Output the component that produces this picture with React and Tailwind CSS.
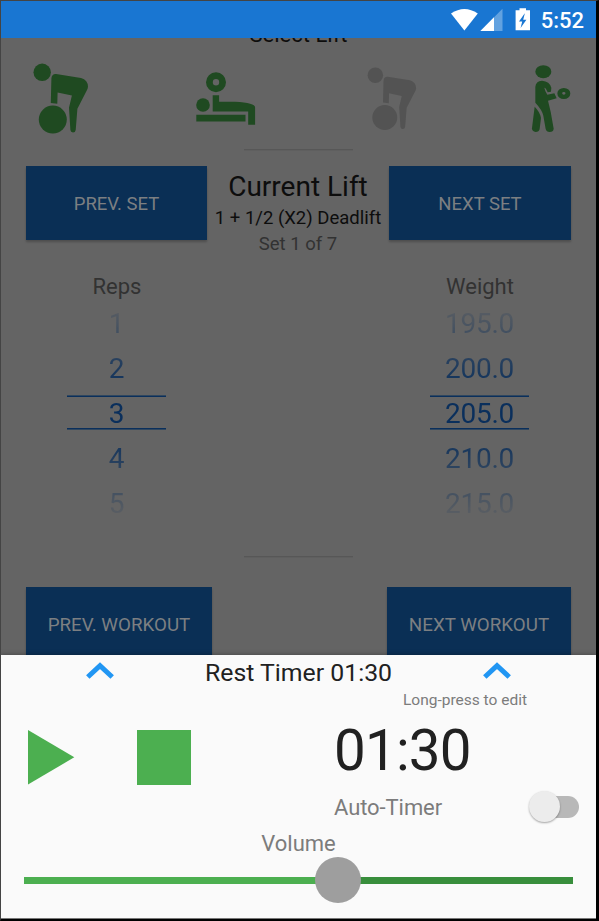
import React from "react";

function StatusBar() {
  return (
    <header className="flex h-[37px] shrink-0 items-center justify-end bg-[#1976d2] pr-3 text-white">
      <svg width="82" height="37" viewBox="450 1 82 37">
        <path d="M451 13.6Q464.4 4.6 477.8 13.6L464.4 30.4Z" fill="#fff" />
        <path d="M480.4 31L502.5 8.8V31Z" fill="#fff" fillOpacity="0.32" />
        <path d="M480.4 31L494 17.3V31Z" fill="#fff" />
        <path
          fillRule="evenodd"
          fill="#fff"
          d="M519.5 8.2h6.5v2h4v20.1h-14.4V10.2h3.9zM524.6 13.6L519 21.6h3.2l-1.6 6.4 5.8-8.2h-3.2l1.6-6.2z"
        />
      </svg>
      <span className="ml-[9px] pt-px text-[22px] leading-[37px] font-medium">5:52</span>
    </header>
  );
}

function DeadliftShape() {
  return (
    <>
      <circle cx="42.2" cy="72.3" r="8.7" />
      <circle cx="52.8" cy="119.6" r="14" />
      <path d="M50.8 102.9L51.4 78.5Q51.8 73.6 56 73.9L81 77.9Q88 80 88 86.8Q87.8 89 86.5 91L77.4 108.8L75.7 130Q75.3 132.6 73 132.6Q70.6 132.4 70.4 130L69 107.8L71.9 95.6L57.6 92.4L57.3 103.7Z" />
    </>
  );
}

function LiftIcons() {
  return (
    <div className="mt-2.5 flex h-[85px] pl-[19px]">
      <svg className="fill-[#1f4a21]" width="80" height="85" viewBox="20 55 80 85">
        <DeadliftShape />
      </svg>
      <svg className="ml-[85px] fill-[#1f4a21]" width="80" height="85" viewBox="185 55 80 85">
        <path
          fillRule="evenodd"
          d="M216 72.3a10 10 0 1 0 0 20a10 10 0 1 0 0-20M216 79.1a3.2 3.2 0 1 1 0 6.4a3.2 3.2 0 1 1 0-6.4"
        />
        <circle cx="203" cy="105" r="6.8" />
        <path d="M212.7 95.2h6.4v6.6H235Q255.1 102.8 255.1 107.5V124.8H248.2V111.5H212.7Z" />
        <path d="M196.3 114.7h49.2v6.8h-49.2z" />
      </svg>
      <svg className="ml-[92px] fill-[#535353]" width="80" height="85" viewBox="357 55 80 85">
        <g transform="translate(367.6 67.6) scale(0.89) translate(-33.5 -63.6)">
          <DeadliftShape />
        </g>
      </svg>
      <svg className="ml-[73px] fill-[#1f4a21]" width="70" height="85" viewBox="510 55 70 85">
        <g transform="translate(510 55) scale(0.33333)">
          <ellipse cx="100" cy="50" rx="24" ry="19.5" />
          <path
            fillRule="evenodd"
            d="M161.500 99a19.500 16.500 0 1 0 0 33a19.500 16.500 0 1 0 0-33M161.500 111a5 4 0 1 1 0 8a5 4 0 1 1 0-8"
          />
          <path d="M76 96Q77 78 96 77Q119 79 124 98L123 110L113 112Q108 98 103 98Q105 109 112 119L133 115L140 130L114 137L122 170L131 221Q130 231 119 231Q109 231 107 222L100 182Q96 164 76 143Z" />
          <path d="M74 155Q89 170 93 188L89 222Q87 231 77 231Q66 230 66 220Z" />
        </g>
      </svg>
    </div>
  );
}

function Divider() {
  return <div className="mx-auto h-[2px] w-[109px] shrink-0 border-b border-[#5f5f5f] bg-[#575757]" />;
}

function NavButton({ className, children }) {
  return (
    <button
      className={
        "flex items-center justify-center bg-[#0a2f55] text-[#7c7f82] shadow-[0_2px_2px_rgba(0,0,0,0.22)] " +
        className
      }
    >
      {children}
    </button>
  );
}

function Picker({ label, values }) {
  return (
    <div className="flex w-[182px] flex-col items-center">
      <div className="text-[22px] leading-[30px] text-[#323232]">{label}</div>
      <div className="mr-[2px] flex w-[99px] flex-col text-center indent-px text-[28px] leading-[43px] tracking-[-0.3px] text-[#0a2f5c] [mask-image:linear-gradient(to_bottom,transparent_-4px,black_88px,black_131px,transparent_222px)]">
        {values.map((value, i) =>
          i === 2 ? (
            <div key={value} className="flex h-[45px] flex-col pt-[3px]">
              <div className="h-[35px] border-y border-[#30475f]">
                <div className="h-[33px] border-y border-[#0a2f5c] leading-[33px]">{value}</div>
              </div>
            </div>
          ) : (
            <div key={value} className="h-[45px]">
              {value}
            </div>
          )
        )}
      </div>
    </div>
  );
}

function Chevron() {
  return (
    <svg width="30" height="20" viewBox="0 0 30 20" className="mb-1 shrink-0">
      <path
        d="M2.800 16L15 4.600L27.200 16"
        fill="none"
        stroke="#2196f3"
        strokeWidth="5"
        strokeLinejoin="miter"
        strokeLinecap="butt"
      />
    </svg>
  );
}

function Workout() {
  return (
    <main className="flex h-[617px] shrink-0 flex-col overflow-hidden bg-[#646464]">
      <div className="-mt-[14px] h-[21px] shrink-0 text-center text-[22px] leading-[21px] text-[#0d0d0d]">
        Select Lift
      </div>
      <LiftIcons />
      <div className="h-[9px] shrink-0" />
      <Divider />
      <section className="mt-[15px] flex h-[106px] shrink-0 items-start pr-[25px] pl-[25px]">
        <NavButton className="h-[74px] w-[181px] pt-[3px] text-[18.500px]">PREV. SET</NavButton>
        <div className="w-[182px] text-center whitespace-nowrap">
          <h1 className="text-[28px] leading-[41px] text-[#0d0d0d]">Current Lift</h1>
          <p className="text-[18.5px] leading-[23px] text-[#0d0d0d]">1 + 1/2 (X2) Deadlift</p>
          <p className="text-[18.5px] leading-[29px] text-[#323232]">Set 1 of 7</p>
        </div>
        <NavButton className="h-[74px] w-[182px] pt-[3px] text-[18.500px]">NEXT SET</NavButton>
      </section>
      <section className="flex h-[284px] shrink-0 justify-between px-[25px]">
        <Picker label="Reps" values={["1", "2", "3", "4", "5"]} />
        <Picker label="Weight" values={["195.0", "200.0", "205.0", "210.0", "215.0"]} />
      </section>
      <Divider />
      <section className="mt-[29px] flex shrink-0 justify-between px-[25px]">
        <NavButton className="h-[75px] w-[186px] pt-[2px] text-[18.800px]">PREV. WORKOUT</NavButton>
        <NavButton className="h-[75px] w-[184px] pt-[2px] text-[18.800px]">NEXT WORKOUT</NavButton>
      </section>
    </main>
  );
}

function RestTimer() {
  return (
    <section className="relative h-[263px] shrink-0 bg-[#fafafa] shadow-[0_0_5px_rgba(0,0,0,0.35)]">
      <div className="flex h-9 items-center justify-between pr-[84px] pl-[84px]">
        <Chevron />
        <h2 className="text-[24.800px] leading-9 text-[#212121]">Rest Timer 01:30</h2>
        <Chevron />
      </div>
      <div className="flex">
        <div className="flex h-[136px] w-[333px] items-start pt-[39px] pl-[27px]">
          <svg width="47" height="55" viewBox="0 0 47 55">
            <path d="M0 0L46.300 27.300L0 54.500Z" fill="#4caf50" />
          </svg>
          <div className="ml-[61.500px] h-[54.500px] w-[54.500px] bg-[#4caf50]" />
        </div>
        <div className="w-[245px]">
          <div className="pl-[69px] text-[15.500px] leading-[18px] text-[#7c7c7c]">Long-press to edit</div>
          <div className="h-[82px] text-[56.500px] leading-[84px] tracking-[-0.8px] text-[#212121]">01:30</div>
          <div className="flex h-[31px] items-center justify-between text-[22px] text-[#7c7c7c]">
            <span className="pt-px tracking-[-0.080px]">Auto-Timer</span>
            <div className="relative h-[22px] w-[39px] rounded-full bg-[#b8b8b8]">
              <div className="absolute top-[-4.500px] left-[-11.500px] size-[31px] rounded-full bg-[#ececec] shadow-[0_1px_2px_rgba(0,0,0,0.35)]" />
            </div>
          </div>
        </div>
      </div>
      <div className="h-[32px] text-center text-[22px] leading-[33px] text-[#7c7c7c]">Volume</div>
      <div className="relative mt-[18px] ml-[23px] flex h-[7px] w-[549px]">
        <div className="w-[314px] bg-[#4caf50]" />
        <div className="flex-1 bg-[#388e3c]" />
        <div className="absolute top-[-20.500px] left-[290.500px] size-[46.500px] rounded-full bg-[#9e9e9e]" />
      </div>
    </section>
  );
}

export default function App() {
  return (
    <div className="h-[921px] w-[599px] overflow-hidden border-t border-r-[3px] border-b-2 border-l border-t-[#444] border-r-black border-b-black border-l-[#444] bg-[#777] font-['Roboto',sans-serif]">
      <div className="flex h-[917px] w-[595px] flex-col overflow-hidden">
        <StatusBar />
        <Workout />
        <RestTimer />
      </div>
    </div>
  );
}
